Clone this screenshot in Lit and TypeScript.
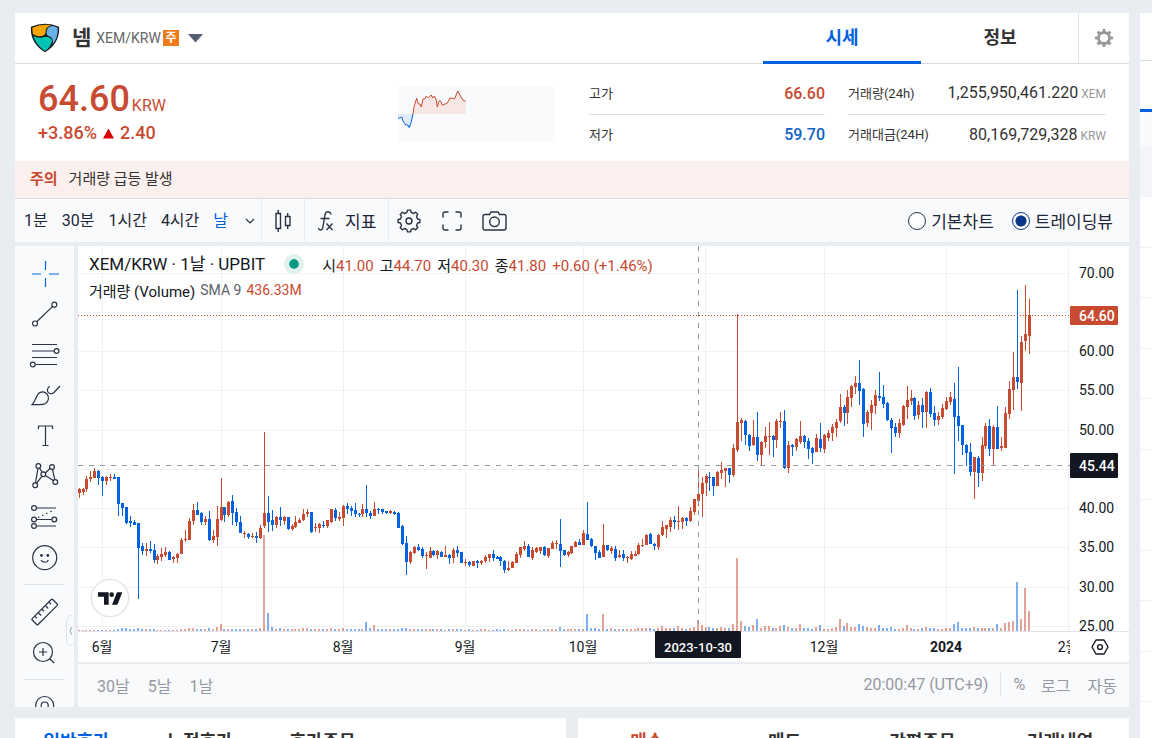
import { LitElement, html, svg, css } from "lit";
import { customElement, state } from "lit/decorators.js";

interface Candle {
  x: number;
  up: boolean;
  high: number;
  top: number;
  bottom: number;
  low: number;
  volume: number;
}

// One entry per day: direction, high, body top, body bottom, low.
const DAYS = `
r488 489 493 498,r488 489 492 495,r476 479 489 492,r471 477 479 482,r468 471 478 478,b470 471 478 485,
b476 477 481 496,r476 477 481 485,r474 477 478 481,b474 477 479 479,b477 477 504 516,b503 503 508 516,
b507 507 523 524,b516 521 523 527,b520 522 525 525,b523 523 548 599,b543 546 551 555,r543 549 551 556,
b541 549 551 553,b544 550 560 563,r554 556 560 564,r548 554 557 561,r547 552 555 557,b551 552 560 560,
r556 557 559 563,r553 554 558 563,r538 540 554 554,r530 539 540 542,r518 521 540 540,r504 510 521 525,
b502 510 515 515,b512 513 522 525,r516 519 522 525,b511 519 540 541,r530 536 540 543,r506 519 537 546,
r478 507 520 521,b507 507 515 522,r501 502 515 517,b495 501 513 525,b508 512 522 526,b516 522 533 533,
r531 533 534 538,b533 534 537 539,r533 536 537 538,b532 536 538 543,r525 528 538 539,r432 513 526 528,
b496 513 522 532,b510 520 525 531,r516 517 525 528,b507 517 520 526,r516 517 521 525,b517 517 529 530,
r524 526 529 531,r516 522 527 528,r518 520 523 523,r509 514 520 521,r509 512 514 517,b512 512 532 533,
r523 527 528 532,r523 524 528 533,b521 525 526 528,r520 520 526 528,r509 509 522 523,b508 510 518 521,
r512 517 519 521,r505 506 518 526,b503 506 509 514,b506 508 511 516,b503 510 514 517,b513 514 515 517,
r504 509 514 517,b485 509 513 517,b511 513 516 519,r502 509 516 516,b508 509 510 514,b509 509 512 514,
b511 511 513 514,r510 511 513 514,b511 512 514 515,b512 513 528 528,b525 526 544 545,b536 543 562 575,
r551 552 562 564,r546 547 553 554,b544 547 550 551,b547 549 556 558,r552 555 556 569,r547 551 558 558,
b550 551 555 556,r550 551 555 559,b551 552 557 557,r546 555 557 557,b554 555 558 564,r548 550 558 563,
b546 550 553 557,b552 552 563 563,r559 562 563 566,b561 562 565 567,r561 561 566 566,b560 561 563 568,
r560 561 563 565,r555 557 561 563,r554 554 558 562,b550 554 558 561,b556 557 559 559,b556 557 561 566,
b560 561 570 573,r561 568 570 571,r561 562 568 568,r552 554 563 563,r547 547 555 558,r541 546 549 551,
b544 546 557 557,r547 550 558 560,r547 548 552 553,r547 547 551 554,b546 547 555 556,r548 548 556 558,
r541 543 549 549,r540 543 544 549,b519 544 551 567,b550 550 555 556,r551 552 555 557,r546 546 553 554,
r541 542 547 547,b539 542 545 545,r530 533 545 545,b502 534 540 540,b538 539 546 547,b546 546 553 560,
b550 552 558 558,r524 545 557 557,b545 545 550 551,r546 548 551 554,b546 549 558 561,r550 555 557 558,
b550 554 558 561,r556 557 558 563,r551 554 559 560,r551 554 556 556,r543 545 554 555,r539 545 546 547,
r534 535 545 545,b533 534 544 544,b543 544 546 550,r534 535 547 550,r521 527 535 536,r525 525 529 538,
r517 520 527 532,b516 520 522 529,r506 521 522 530,r517 518 522 529,b517 518 521 526,r507 511 521 522,
r499 499 512 515,r471 494 501 506,r477 483 494 517,r474 476 483 496,b472 477 478 491,b477 477 486 496,
r471 472 486 486,r462 470 473 479,r468 468 471 487,b468 468 475 483,r444 448 475 477,r314 422 450 452,
r418 420 423 441,b420 421 435 445,b434 435 446 451,r420 437 445 446,b412 437 455 461,r441 442 455 465,
r427 436 442 448,r422 436 437 455,b435 436 440 457,r419 421 440 448,r412 421 422 428,b410 421 468 469,
r441 445 468 473,b444 445 447 456,r438 439 447 451,r421 436 442 444,b435 436 442 448,b438 441 449 459,
b447 448 453 464,r434 438 452 452,b423 439 448 452,r434 435 449 453,r430 433 438 441,r424 427 433 441,
r419 422 428 437,r394 407 421 423,b405 407 413 426,r390 397 413 424,r385 386 398 407,r376 383 387 394,
b360 383 391 405,b388 389 424 437,r410 412 423 427,r400 405 413 430,r390 395 406 414,b372 396 398 401,
b385 397 404 408,b402 403 420 421,b418 420 428 453,b423 427 433 437,r419 423 433 438,r405 406 425 426,
r386 400 407 419,r390 398 401 405,b397 398 416 420,r401 405 415 419,b398 405 412 428,r391 392 412 428,
b388 392 414 417,b406 413 420 426,r412 416 420 425,r404 408 417 419,r397 401 409 410,r392 397 402 405,
b383 399 417 474,b367 416 426 441,b425 425 445 455,b444 445 453 466,b443 452 472 476,r457 457 472 499,
b456 458 473 487,r437 445 473 481,r423 426 446 449,b419 426 449 456,r425 427 449 465,b406 427 449 449,
r437 446 448 451,r407 413 448 448,r381 389 414 419,r352 377 390 410,b290 377 382 389,r336 342 383 411,
r285 334 341 351,r299 315 336 354`;

// Bar height of the daily volume, counted from the first candle.
const VOLUME =
  "1 1 1 1 1 1 1 1 1 1 2 3 3 2 2 3 2 2 2 2 1 1 1 1 1 1 2 2 3 3 2 2 2 3 2 4 7 2 2 2 2 2 2 2 2 2 3 96 18 4 2 3 2 2 2 2 2 3 3 2 2 2 2 2 3 2 2 3 2 2 2 2 2 9 3 6 2 2 2 2 2 2 3 3 2 2 2 2 2 2 2 2 2 1 2 2 2 2 1 2 1 1 2 2 1 1 2 1 2 1 1 2 2 2 1 2 2 1 2 2 2 2 4 2 2 2 2 2 2 17 3 3 2 17 2 3 2 2 2 2 2 2 3 3 3 3 2 3 5 3 3 3 5 3 2 3 4 11 6 4 4 3 3 4 3 3 7 73 10 5 4 6 12 3 5 5 3 3 5 6 4 3 3 7 3 3 2 4 6 2 2 3 4 12 5 8 4 4 7 5 4 3 3 6 3 3 4 2 2 3 6 3 2 2 3 4 3 3 2 2 3 3 7 9 3 3 3 4 3 3 3 3 3 7 3 8 9 10 49 12 43 20"
    .split(" ")
    .map(Number);

const PLOT_TOP = 246;
const PLOT_WIDTH = 992;
const PLOT_HEIGHT = 385;
const DAY_STEP = 966 / 245;

const CANDLES: Candle[] = DAYS.replace(/\n/g, "")
  .split(",")
  .map((entry, i) => {
    const [high, top, bottom, low] = entry
      .slice(1)
      .split(" ")
      .map((v) => Number(v) - PLOT_TOP);
    return {
      x: Math.round(24.25 + (i - 6) * DAY_STEP),
      up: entry[0] === "r",
      high,
      top,
      bottom,
      low,
      volume: VOLUME[i] ?? 2,
    };
  });

const PRICE_TICKS = [
  { y: 27, label: "70.00" },
  { y: 66, label: "" },
  { y: 105, label: "60.00" },
  { y: 144, label: "55.00" },
  { y: 184, label: "50.00" },
  { y: 223, label: "" },
  { y: 262, label: "40.00" },
  { y: 301, label: "35.00" },
  { y: 341, label: "30.00" },
  { y: 380, label: "25.00" },
];

const TIME_TICKS = [
  { x: 24, label: "6월" },
  { x: 143, label: "7월" },
  { x: 265, label: "8월" },
  { x: 387, label: "9월" },
  { x: 505, label: "10월" },
  { x: 627, label: "" },
  { x: 746, label: "12월" },
  { x: 868, label: "2024", bold: true },
  { x: 990, label: "2월" },
];

const GEAR = (teeth: number, outer: number, inner: number, c: number) => {
  const pts: string[] = [];
  const step = (Math.PI * 2) / teeth;
  for (let i = 0; i < teeth; i++) {
    const a = i * step - Math.PI / 2;
    for (const [k, r] of [
      [-0.3, inner],
      [-0.18, outer],
      [0.18, outer],
      [0.3, inner],
    ]) {
      pts.push(
        `${(c + r * Math.cos(a + k * step)).toFixed(2)} ${(c + r * Math.sin(a + k * step)).toFixed(2)}`
      );
    }
  }
  return `M${pts.join("L")}Z`;
};

@customElement("price-chart")
export class PriceChart extends LitElement {
  static styles = css`
    :host {
      display: flex;
      justify-content: flex-end;
      overflow: hidden;
      position: relative;
      background: #fff;
      font-family: "Trebuchet MS", Roboto, "Noto Sans CJK KR", sans-serif;
      color: #131722;
    }
    .canvas {
      flex: none;
      width: 1051px;
      height: 416px;
      display: block;
    }
    .grid {
      fill: #f0f1f3;
    }
    .axis {
      fill: #e0e3eb;
    }
    .up {
      fill: #c84a31;
    }
    .down {
      fill: #0062df;
    }
    .volume {
      opacity: 0.5;
    }
    .cross {
      stroke: #9598a1;
      stroke-dasharray: 5 6;
    }
    .last {
      stroke: #c84a31;
      stroke-dasharray: 1 2;
    }
    .tick {
      font-size: 14px;
      fill: #131722;
    }
    .bold {
      font-weight: 700;
    }
    .middle {
      text-anchor: middle;
    }
    .tag {
      fill: #131722;
    }
    .tag-text {
      font-size: 14px;
      font-weight: 500;
      fill: #fff;
    }
    .tag-date {
      font-size: 13px;
    }
    .legend {
      position: absolute;
      left: 11px;
      top: 6px;
      display: flex;
      flex-direction: column;
      gap: 2px;
    }
    .line {
      display: flex;
      align-items: center;
      height: 24px;
      white-space: pre;
    }
    .title {
      font-size: 17px;
      line-height: 24px;
      margin-right: 19px;
    }
    .status {
      width: 10px;
      height: 10px;
      border: 5px solid #dff2ee;
      border-radius: 50%;
      background: #089981;
      background-clip: padding-box;
      margin-right: 18px;
    }
    .quote {
      display: flex;
      gap: 6px;
      font-size: 15px;
      line-height: 24px;
      padding-top: 3px;
    }
    .value {
      color: #c84a31;
    }
    .study {
      font-size: 15px;
    }
    .param {
      font-size: 14px;
      color: #5d606b;
      margin: 0 5px;
    }
    .amount {
      font-size: 14px;
      color: #c84a31;
    }
    .brand {
      position: absolute;
      left: 12px;
      top: 332px;
      width: 40px;
      height: 40px;
    }
    .brand svg,
    .settings svg {
      display: block;
    }
    .settings {
      position: absolute;
      right: 19px;
      top: 391px;
      width: 20px;
      height: 20px;
      padding: 0;
      border: 0;
      background: none;
    }
  `;

  private renderCandle(c: Candle) {
    return svg`<g class=${c.up ? "up" : "down"}>
      <rect class="volume" x=${c.x - 1} y=${PLOT_HEIGHT - c.volume} width="2" height=${c.volume}></rect>
      <rect x=${c.x} y=${c.high} width="1" height=${Math.max(1, c.low - c.high)}></rect>
      <rect x=${c.x - 1} y=${c.top} width="3" height=${Math.max(1, c.bottom - c.top)}></rect>
    </g>`;
  }

  render() {
    return html`
      <svg class="canvas" viewBox="0 0 1051 416" role="img" aria-label="XEM/KRW 일봉 차트">
        <defs>
          <clipPath id="plot"><rect width="992" height="385"></rect></clipPath>
          <clipPath id="times"><rect y="385" width="992" height="31"></rect></clipPath>
          <clipPath id="prices"><rect x="992" width="59" height="385"></rect></clipPath>
        </defs>
        ${PRICE_TICKS.map((t) => svg`<rect class="grid" x="0" y=${t.y} width=${PLOT_WIDTH} height="1"></rect>`)}
        ${TIME_TICKS.map((t) => svg`<rect class="grid" x=${t.x} y="0" width="1" height=${PLOT_HEIGHT}></rect>`)}
        <g clip-path="url(#plot)">${CANDLES.map((c) => this.renderCandle(c))}</g>
        <path class="last" d="M0 69.5H992" />
        <path class="cross" d="M0 219.5H992" />
        <path class="cross" d="M620.5 0V385" />
        <rect class="axis" x="0" y="385" width="1051" height="1"></rect>
        <g clip-path="url(#prices)">
          ${PRICE_TICKS.map((t) => svg`<text class="tick" x="1001" y=${t.y + 5}>${t.label}</text>`)}
        </g>
        <g clip-path="url(#times)">
          ${TIME_TICKS.map(
            (t) => svg`<text class="tick middle ${t.bold ? "bold" : ""}" x=${t.x} y="406">${t.label}</text>`
          )}
        </g>
        <rect class="up" x="992" y="60" width="48" height="19" rx="1"></rect>
        <text class="tag-text" x="1001" y="75">64.60</text>
        <rect class="tag" x="992" y="207" width="48" height="25" rx="1"></rect>
        <text class="tag-text" x="1001" y="225">45.44</text>
        <rect class="tag" x="577" y="385" width="86" height="27" rx="1"></rect>
        <text class="tag-text tag-date middle" x="620" y="406">2023-10-30</text>
      </svg>
      <div class="legend">
        <div class="line">
          <span class="title">XEM/KRW · 1날 · UPBIT</span>
          <span class="status"></span>
          <span class="quote">
            <span>시<span class="value">41.00</span></span>
            <span>고<span class="value">44.70</span></span>
            <span>저<span class="value">40.30</span></span>
            <span>종<span class="value">41.80</span></span>
            <span class="value">+0.60 (+1.46%)</span>
          </span>
        </div>
        <div class="line">
          <span class="study">거래량 (Volume)</span><span class="param">SMA 9</span
          ><span class="amount">436.33M</span>
        </div>
      </div>
      <a class="brand" href="#" aria-label="TradingView">
        <svg width="40" height="40" viewBox="-60 -60 120 120">
          <circle r="56" fill="#fff" stroke="#e0e3eb" stroke-width="4"></circle>
          <path d="M-36-17H-4V20H-18V-4H-36Z M21-17H37L22 20H6Z" fill="#131722" />
          <circle cx="5" cy="-10" r="7" fill="#131722"></circle>
        </svg>
      </a>
      <button class="settings" aria-label="차트 설정">
        <svg width="20" height="20" viewBox="0 0 20 20" fill="none" stroke="#131722" stroke-width="1.4">
          <path d="M6 3h8l4 7-4 7H6l-4-7z" stroke-linejoin="round" />
          <circle cx="10" cy="10" r="2.4"></circle>
        </svg>
      </button>
    `;
  }
}

const RAIL_ICONS = [
  {
    name: "십자선",
    art: svg`<path stroke="#0062df" d="M2 15h9M19 15h10M15.500 2v9M15.500 19v9" />`,
  },
  {
    name: "추세선",
    art: svg`<circle cx="5" cy="23.500" r="2.500"/><circle cx="24.300" cy="4.700" r="2.500"/><path d="M7 21.500L22.400 6.600"/>`,
  },
  {
    name: "피보나치",
    art: svg`<path d="M2 4.500h25M2 11h22M2 17.500h25M5.500 24.500H27"/><circle cx="26.600" cy="11" r="2.400"/><circle cx="2.800" cy="24.500" r="2.400"/>`,
  },
  {
    name: "브러시",
    art: svg`<path d="M2 23.700C5.500 20 6 15.500 8.500 12.500C11 10 15 10.300 17.200 13.200C19.500 16.500 18.500 20.500 15.500 22.600C13.500 23.900 11 23.700 8.500 23.700ZM19.800 5.300C16.500 7.500 16.800 11 19.300 12.300C21.300 13.200 22.700 12.800 24 11.500L30 5"/>`,
  },
  {
    name: "텍스트",
    art: svg`<path d="M8.500 8V5h14v3M15.500 5v19.500M12.500 24.500h6"/>`,
  },
  {
    name: "패턴",
    art: svg`<circle cx="8.300" cy="4" r="2.400"/><circle cx="22" cy="5" r="2.400"/><circle cx="13.300" cy="12.300" r="2.400"/><circle cx="5.200" cy="23.300" r="2.400"/><circle cx="25.300" cy="20" r="2.400"/><path d="M8 6.400L5.500 21M9.500 6.200l2.800 4M15.300 11l4.800-4.500M22.500 7.300l2.300 10.400M6.500 21.300l5.600-7.100M15.300 13.600l8 5"/>`,
  },
  {
    name: "예측",
    art: svg`<circle cx="4" cy="6" r="2.400"/><path d="M6.500 6H26M6.500 17.500H22M6.500 24H26"/><circle cx="4" cy="17.500" r="2.400"/><circle cx="24.300" cy="17.500" r="2.400"/><circle cx="4" cy="24" r="2.400"/><path stroke-dasharray="1.500 3" d="M8 15.500L24 8"/>`,
  },
  {
    name: "이모지",
    art: svg`<circle cx="14.700" cy="14.700" r="12"/><circle cx="11.500" cy="12.500" r=".8" fill="#2a3142"/><circle cx="17.800" cy="12.500" r=".8" fill="#2a3142"/><path d="M11 17c1.500 3 5.900 3 7.400 0"/>`,
  },
];

@customElement("tool-rail")
export class ToolRail extends LitElement {
  static styles = css`
    :host {
      display: flex;
      flex-direction: column;
      align-items: center;
      position: relative;
      overflow: hidden;
      background: #f9fafc;
      padding-top: 8px;
      box-sizing: border-box;
    }
    .group {
      display: flex;
      flex-direction: column;
      flex: none;
      height: 324px;
    }
    .pair {
      height: 81px;
      margin-top: 7px;
    }
    .tool {
      flex: 1;
      display: flex;
      align-items: center;
      padding: 0;
      border: 0;
      background: none;
    }
    .tool svg {
      display: block;
      fill: none;
      stroke: #2a3142;
      stroke-width: 1.2;
      overflow: visible;
    }
    .rule {
      width: 41px;
      height: 1px;
      flex: none;
      background: #e0e3eb;
      margin-top: 6px;
    }
    .late {
      flex: none;
      margin-top: 11px;
    }
    .fold {
      position: absolute;
      right: -2px;
      bottom: 61px;
      width: 10px;
      height: 31px;
      padding: 0;
      border: 1px solid #e0e3eb;
      border-radius: 5px;
      background: #f9fafc;
    }
    .fold svg {
      display: block;
      margin: auto;
    }
  `;

  render() {
    return html`
      <div class="group">
        ${RAIL_ICONS.map(
          (i) => html`<button class="tool" aria-label=${i.name}>
            <svg width="30" height="30" viewBox="0 0 30 30">${i.art}</svg>
          </button>`
        )}
      </div>
      <div class="rule"></div>
      <div class="group pair">
        <button class="tool" aria-label="측정">
          <svg width="30" height="30" viewBox="0 0 30 30">
            <g transform="translate(14.700 15) rotate(-45)">
              <rect x="-14.500" y="-4.200" width="29" height="8.400" rx="1"></rect>
              <path d="M-10-4v3M-5-4v4M0-4v3M5-4v4M10-4v3" />
            </g>
          </svg>
        </button>
        <button class="tool" aria-label="확대">
          <svg width="30" height="30" viewBox="0 0 30 30">
            <circle cx="13" cy="14" r="9.500"></circle>
            <path d="M13 10v8M9 14h8M19.700 20.700l4.500 4.300" />
          </svg>
        </button>
      </div>
      <div class="rule"></div>
      <button class="tool late" aria-label="자석">
        <svg width="30" height="30" viewBox="0 0 30 30">
          <circle cx="14.700" cy="14.500" r="9"></circle>
          <circle cx="14.700" cy="14.500" r="3.500"></circle>
        </svg>
      </button>
      <button class="fold" aria-label="도구 접기">
        <svg width="6" height="10" viewBox="0 0 6 10" fill="none" stroke="#9aa1ae">
          <path d="M4 1L2 5l2 4" />
        </svg>
      </button>
    `;
  }
}

@customElement("app-root")
export class AppRoot extends LitElement {
  static styles = css`
    :host {
      display: block;
      box-sizing: border-box;
      height: 100vh;
      overflow: hidden;
      background: #e9ecf1;
      font-family: Roboto, "Noto Sans CJK KR", sans-serif;
      color: #333;
      padding: 13px 0 0 15px;
    }
    button {
      font-family: inherit;
      padding: 0;
      border: 0;
      background: none;
      color: inherit;
    }
    svg {
      display: block;
    }
    .page {
      display: grid;
      grid-template-columns: minmax(0, 1fr) 12px;
      column-gap: 11px;
    }
    .main {
      display: flex;
      flex-direction: column;
      gap: 11px;
    }
    .head {
      display: flex;
      height: 50px;
      background: #fff;
      border-bottom: 1px solid #d9dbe0;
    }
    .coin {
      flex: 1;
      display: flex;
      align-items: center;
      padding-left: 15px;
      font-size: 14px;
      color: #666;
    }
    .name {
      margin: 0 5px 0 12px;
      font-size: 21px;
      font-weight: 700;
      line-height: 24px;
      color: #333;
    }
    .badge {
      width: 16px;
      height: 16px;
      margin: 0 9px 0 2px;
      background: #ef7b1a;
      color: #fff;
      font-size: 12px;
      font-weight: 700;
      line-height: 16px;
      text-align: center;
    }
    .tabs {
      display: flex;
      margin-bottom: -1px;
    }
    .tab {
      width: 158px;
      box-sizing: border-box;
      border-bottom: 3px solid transparent;
      font-size: 18px;
      font-weight: 700;
      padding-bottom: 3px;
    }
    .tab-on {
      color: #0062df;
      border-bottom-color: #0062df;
    }
    .config {
      width: 51px;
      box-sizing: border-box;
      border-left: 1px solid #dfe0e8;
      margin-left: -1px;
      display: grid;
      place-items: center;
    }
    .summary {
      display: flex;
      height: 97px;
      box-sizing: border-box;
      padding: 0 23px;
      background: #fff;
    }
    .price {
      flex: 1;
      display: flex;
      flex-direction: column;
      padding-top: 15px;
      font-weight: 500;
      color: #c84a31;
    }
    .now {
      font-size: 36px;
      line-height: 40px;
    }
    .unit {
      font-size: 16px;
      font-weight: 400;
      line-height: 16px;
      margin-left: 2px;
    }
    .change {
      display: flex;
      align-items: center;
      gap: 6px;
      font-size: 18px;
      line-height: 28px;
    }
    .spark {
      margin: 22px 34px 0 0;
      background: #f9fafc;
    }
    .stats {
      display: grid;
      grid-template-rows: 41px 41px;
      margin: 9px 0 0;
    }
    .range {
      width: 236px;
      margin-right: 23px;
    }
    .flow {
      width: 258px;
    }
    .stat {
      display: flex;
      align-items: center;
      justify-content: space-between;
      font-size: 13px;
      line-height: 20px;
    }
    .stat + .stat {
      border-top: 1px solid #dfe0e8;
    }
    .stat dd {
      margin: 0;
      font-size: 16px;
    }
    .stat small {
      font-size: 12px;
      color: #999;
      margin-left: 3px;
    }
    .high {
      color: #c84a31;
      font-weight: 500;
    }
    .low {
      color: #1261c4;
      font-weight: 500;
    }
    .notice {
      display: flex;
      align-items: center;
      gap: 11px;
      height: 35px;
      margin: 0;
      padding: 0 15px 2px;
      border-bottom: 1px solid #e0dcde;
      background: #fbf0ee;
      font-size: 15px;
      line-height: 20px;
    }
    .notice strong {
      color: #c84a31;
    }
    .toolbar {
      display: flex;
      align-items: center;
      height: 43px;
      background: #f9fafc;
      margin-bottom: 4px;
      color: #1e2638;
    }
    .span {
      padding: 0 7px;
      font-size: 16px;
      line-height: 43px;
    }
    .spans {
      display: flex;
      width: 246px;
      box-sizing: border-box;
      padding: 0 4px 0 2px;
    }
    .span-on {
      color: #0062df;
    }
    .cell {
      display: flex;
      align-items: center;
      gap: 8px;
      height: 43px;
      box-sizing: border-box;
      border-left: 1px solid #e9ecf1;
      padding: 0 12px;
      font-size: 17px;
    }
    .more {
      margin-left: auto;
      padding: 0 2px;
    }
    .wide {
      gap: 20px;
      padding: 0 8px;
    }
    .toolbar svg {
      fill: none;
      stroke: #2a3142;
      stroke-width: 1.4;
    }
    .modes {
      display: flex;
      gap: 18px;
      margin-left: auto;
      padding-right: 16px;
      font-size: 17px;
    }
    .mode {
      display: flex;
      align-items: center;
      gap: 5px;
    }
    .mode input {
      appearance: none;
      width: 18px;
      height: 18px;
      margin: 0;
      border: 1px solid #2a3447;
      border-radius: 50%;
      background: #fff;
    }
    .mode input:checked {
      border-color: #093687;
      background: radial-gradient(#093687 5px, #fff 6px);
    }
    .board {
      display: grid;
      grid-template-columns: 59px minmax(0, 1fr);
      column-gap: 4px;
      height: 461px;
    }
    .panel {
      display: flex;
      flex-direction: column;
      gap: 2px;
    }
    .foot {
      flex: 1;
      display: flex;
      align-items: center;
      background: #f9fafc;
      padding: 0 12px 2px 19px;
      font-size: 16px;
      color: #9598a1;
    }
    .foot button {
      font-size: 16px;
      margin-right: 18px;
    }
    .foot .last {
      margin-right: 0;
    }
    .clock {
      margin-left: auto;
      padding-right: 12px;
      margin-right: 12px;
      border-right: 1px solid #e0e3eb;
      line-height: 25px;
    }
    .foot .percent {
      margin-right: 16px;
    }
    .foot .log {
      margin-right: 17px;
    }
    .cards {
      display: grid;
      grid-template-columns: 1fr 1fr;
      gap: 12px;
    }
    .card {
      display: flex;
      height: 50px;
      background: #fff;
    }
    .choice {
      flex: 1;
      font-size: 18px;
      font-weight: 700;
      line-height: 26px;
      padding-bottom: 3px;
    }
    .book {
      padding-right: 182px;
    }
    .blue {
      color: #0062df;
    }
    .red {
      color: #c84a31;
    }
    .side {
      background: #fff;
      overflow: hidden;
    }
    .search {
      height: 47px;
      border-bottom: 1px solid #d9dbe0;
    }
    .market {
      height: 48px;
      border-bottom: 3px solid #0062df;
    }
    .filter {
      height: 34px;
      background: #f9fafc;
    }
    .picked {
      height: 51px;
      background: #f4f5f8;
    }
    .row {
      height: 49px;
      border-bottom: 1px solid #f1f1f4;
    }
    .row:nth-child(odd) {
      height: 50px;
    }
  `;

  @state() private span = "날";
  @state() private mode = "트레이딩뷰";

  private renderHead() {
    return html`<header class="head">
      <div class="coin">
        <svg width="30" height="30" viewBox="-1 -1 90 90">
          <path d="M2 10Q44-8 86 10Q90 58 44 87Q-2 58 2 10Z" fill="#17191d" />
          <path d="M6 13Q32 1 62 6Q44 12 46 26Q44 40 26 39Q15 38 8 32Q6 22 6 13Z" fill="#fba500" />
          <path d="M69 8L82 13Q84 42 67 62Q70 46 60 40Q46 38 49 23Q52 8 69 8Z" fill="#67b2e8" />
          <path d="M9 38Q28 47 44 40Q63 40 65 52Q64 68 44 83Q17 65 9 38Z" fill="#00c4b3" />
        </svg>
        <strong class="name">넴</strong>XEM/KRW<span class="badge">주</span>
        <svg width="15" height="9" viewBox="0 0 15 9"><path d="M0 0H15L7.500 8.500Z" fill="#555e72" /></svg>
      </div>
      <nav class="tabs">
        <button class="tab tab-on">시세</button>
        <button class="tab">정보</button>
      </nav>
      <button class="config" aria-label="설정">
        <svg width="20" height="20" viewBox="0 0 20 20">
          <path d=${GEAR(8, 9.2, 6.9, 10) + "M10 5.900a4.100 4.100 0 100 8.200a4.100 4.100 0 100-8.200Z"} fill="#999" fill-rule="evenodd" />
        </svg>
      </button>
    </header>`;
  }

  private renderSummary() {
    return html`<section class="summary">
      <div class="price">
        <div class="now">64.60<span class="unit">KRW</span></div>
        <div class="change">
          <span>+3.86%</span>
          <svg width="11" height="11" viewBox="0 0 11 11"><path d="M0 10.500H11L5.500 .5Z" fill="#dd0000" /></svg>
          <span>2.40</span>
        </div>
      </div>
      <svg class="spark" width="157" height="56" viewBox="0 0 157 56">
        <path d="M0 28V32L3.700 31L5 35L7.700 39L11.300 41.700L13 36.700L15 28Z" fill="#dfeaf8" />
        <path
          d="M15 28L16 21L18.700 12L20.300 18H22L23.300 21L25 13H26.700L28.300 10L30.300 12L33.300 9L34.700 12L36.300 10L38 13L39.300 21L41 15H42.700L44.300 19.300L49.300 17L52 12L56.700 12.700L59.700 5L62 9L64.700 14L67.700 15.300V28Z"
          fill="#f6e7e5"
        />
        <path
          d="M0 32H2L3.700 31L5 35L7.700 39H10L11.300 41.700L13 36.700L15 28"
          fill="none"
          stroke="#0062df"
        />
        <path
          d="M15 28L16 21L18.700 12L20.300 18H22L23.300 21L25 13H26.700L28.300 10L30.300 12L33.300 9L34.700 12L36.300 10L38 13L39.300 21L41 15H42.700L44.300 19.300L49.300 17L52 12L56.700 12.700L59.700 5L62 9L64.700 14L67.700 15.300"
          fill="none"
          stroke="#c84a31"
        />
      </svg>
      <dl class="stats range">
        <div class="stat"><dt>고가</dt><dd class="high">66.60</dd></div>
        <div class="stat"><dt>저가</dt><dd class="low">59.70</dd></div>
      </dl>
      <dl class="stats flow">
        <div class="stat"><dt>거래량(24h)</dt><dd>1,255,950,461.220<small>XEM</small></dd></div>
        <div class="stat"><dt>거래대금(24H)</dt><dd>80,169,729,328<small>KRW</small></dd></div>
      </dl>
    </section>`;
  }

  private renderToolbar() {
    return html`<div class="toolbar">
      <div class="spans">
        ${["1분", "30분", "1시간", "4시간", "날"].map(
          (s) => html`<button
            class="span ${s === this.span ? "span-on" : ""}"
            @click=${() => (this.span = s)}
          >${s}</button>`
        )}
        <button class="more" aria-label="주기 더보기">
          <svg width="10" height="6" viewBox="0 0 10 6"><path d="M1 1l4 4 4-4" stroke-width="1.200" /></svg>
        </button>
      </div>
      <button class="cell" aria-label="캔들">
        <svg width="18" height="24" viewBox="0 0 18 24">
          <path d="M2 4.500h4.500v15H2zM4.200 1v3.500M4.200 19.500V23M11.500 7.500H16v9h-4.500zM13.700 4v3.500M13.700 16.500V20" />
        </svg>
      </button>
      <button class="cell">
        <svg width="20" height="22" viewBox="0 0 20 22">
          <path d="M14 4.500C13.500 1.500 9 .5 8.200 4L5.800 17.500C5.200 21 1.800 20.500 1.500 18M3.500 8.500h9M9.500 13.500l6 6.500M15.500 13.500l-6 6.500" />
        </svg>
        지표
      </button>
      <div class="cell wide">
        <button aria-label="차트 속성">
          <svg width="25" height="24" viewBox="0 0 25 24">
            <path d=${GEAR(8, 11, 8.8, 12)} stroke-linejoin="round" /><circle cx="12" cy="12" r="3"></circle>
          </svg>
        </button>
        <button aria-label="전체 화면">
          <svg width="20" height="20" viewBox="0 0 20 20">
            <path d="M1 6.500V3a2 2 0 012-2h3.500M13.500 1H17a2 2 0 012 2v3.500M19 13.500V17a2 2 0 01-2 2h-3.500M6.500 19H3a2 2 0 01-2-2v-3.500" />
          </svg>
        </button>
        <button aria-label="스냅샷">
          <svg width="25" height="20" viewBox="0 0 25 20">
            <path d="M3 3.500h4.500L9 1h7l1.500 2.500H22a2 2 0 012 2V17a2 2 0 01-2 2H3a2 2 0 01-2-2V5.500a2 2 0 012-2z" />
            <circle cx="12.500" cy="10.800" r="4.800"></circle>
          </svg>
        </button>
      </div>
      <div class="modes">
        ${["기본차트", "트레이딩뷰"].map(
          (m) => html`<label class="mode">
            <input type="radio" name="mode" .checked=${m === this.mode} @change=${() => (this.mode = m)} />${m}
          </label>`
        )}
      </div>
    </div>`;
  }

  render() {
    return html`<div class="page">
      <main class="main">
        <article>
          ${this.renderHead()} ${this.renderSummary()}
          <p class="notice"><strong>주의</strong>거래량 급등 발생</p>
          ${this.renderToolbar()}
          <div class="board">
            <tool-rail></tool-rail>
            <div class="panel">
              <price-chart></price-chart>
              <div class="foot">
                <button>30날</button><button>5날</button><button>1날</button>
                <span class="clock">20:00:47 (UTC+9)</span>
                <button class="percent">%</button><button class="log">로그</button
                ><button class="last">자동</button>
              </div>
            </div>
          </div>
        </article>
        <div class="cards">
          <nav class="card book">
            <button class="choice blue">일반호가</button>
            <button class="choice">누적호가</button>
            <button class="choice">호가주문</button>
          </nav>
          <nav class="card">
            <button class="choice red">매수</button>
            <button class="choice">매도</button>
            <button class="choice">간편주문</button>
            <button class="choice">거래내역</button>
          </nav>
        </div>
      </main>
      <aside class="side">
        <div class="search"></div>
        <div class="market"></div>
        <div class="filter"></div>
        <div class="picked"></div>
        ${Array.from({ length: 11 }, () => html`<div class="row"></div>`)}
      </aside>
    </div>`;
  }
}
